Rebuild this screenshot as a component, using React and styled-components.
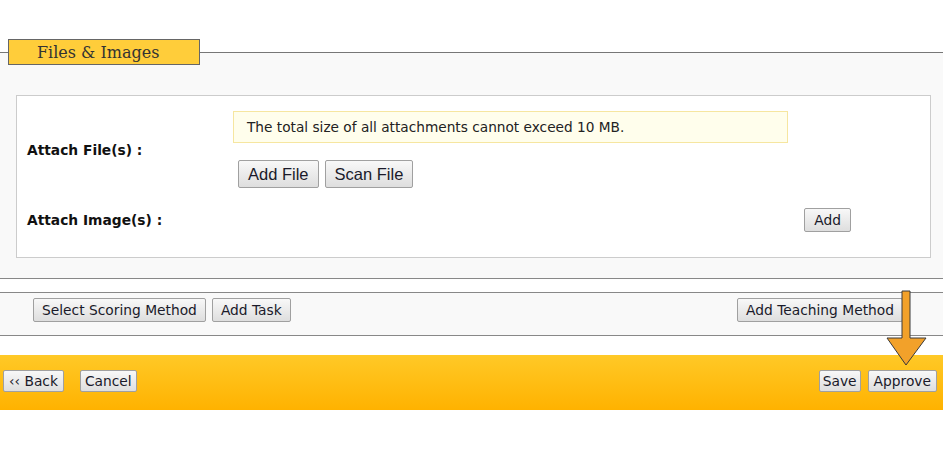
import React from "react";
import styled, { createGlobalStyle } from "styled-components";

const GlobalStyle = createGlobalStyle`
    body {
        margin: 0;
        background: #fff;
        font-family: "DejaVu Sans", Verdana, sans-serif;
        color: #222;
    }
`;

const Page = styled.div`
    position: relative;
    width: 943px;
    padding-top: 52px;
`;

const Section = styled.section`
    border-top: 1px solid #777;
    border-bottom: 1px solid #888;
    background: #f9f9f9;
    padding: 0 12px 20px 16px;
`;

const Legend = styled.div`
    width: 190px;
    height: 24px;
    margin: -14px 0 0 -8px;
    border: 1px solid #666;
    background: #ffcd3a;
    font-family: "DejaVu Serif", Georgia, serif;
    font-size: 16px;
    line-height: 25px;
    color: #333;
    text-indent: 28px;
`;

const Box = styled.div`
    margin-top: 30px;
    background: #fff;
    border: 1px solid #ccc;
    display: grid;
    grid-template-columns: 206px 1fr;
    row-gap: 20px;
    padding: 15px 0 25px 10px;
`;

const Label = styled.div`
    align-self: center;
    font-weight: bold;
    font-size: 13.8px;
    color: #111;
`;

const Cell = styled.div`
    display: flex;
    flex-direction: column;
    align-items: flex-start;
    gap: 17px;
`;

const Notice = styled.div`
    width: 540px;
    height: 30px;
    line-height: 30px;
    padding-left: 13px;
    background: #fffeec;
    border: 1px solid #f6e6a0;
    font-size: 13.7px;
    color: #222;
`;

const Row = styled.div`
    display: flex;
    gap: 6px;
    margin-left: 5px;
`;

const RightCell = styled.div`
    display: flex;
    justify-content: flex-end;
    padding-right: 79px;
`;

const Button = styled.button`
    height: ${p => p.$h || 24}px;
    padding: 0 ${p => p.$px || 8}px;
    font-family: ${p => (p.$arial ? '"Liberation Sans", Arial, sans-serif' : '"DejaVu Sans", Verdana, sans-serif')};
    font-size: ${p => p.$fs || 13.8}px;
    color: #1a1a2a;
    background: linear-gradient(#f8f8f8, #dedede);
    border: 1px solid #a0a0a0;
    border-radius: 2px;
    cursor: pointer;
    white-space: nowrap;
`;

const Gap = styled.div`
    height: 13px;
`;

const Toolbar = styled.div`
    display: flex;
    align-items: flex-start;
    gap: 6px;
    border-top: 1px solid #888;
    border-bottom: 1px solid #888;
    background: #f9f9f9;
    padding: 5px 40px 13px 33px;
`;

const Spacer = styled.div`
    flex: 1;
`;

const ActionBar = styled.div`
    margin-top: 19px;
    height: 55px;
    box-sizing: border-box;
    display: flex;
    align-items: flex-start;
    gap: 7px;
    padding: 15px 6px 0 3px;
    background: linear-gradient(#ffc927, #ffb200);
`;

const BackGroup = styled.div`
    display: flex;
    gap: 16px;
`;

const Arrow = styled.svg`
    position: absolute;
    left: 886px;
    top: 290px;
`;

export default function App() {
    return (
        <Page>
            <GlobalStyle />

            {/* Files & Images */}
            <Section>
                <Legend>Files &amp; Images</Legend>
                <Box>
                    <Label>Attach File(s) :</Label>
                    <Cell>
                        <Notice>The total size of all attachments cannot exceed 10 MB.</Notice>
                        <Row>
                            <Button $arial $fs={16.5} $h={28} $px={9}>Add File</Button>
                            <Button $arial $fs={16.5} $h={28} $px={9}>Scan File</Button>
                        </Row>
                    </Cell>
                    <Label>Attach Image(s) :</Label>
                    <RightCell>
                        <Button $h={24} $px={9}>Add</Button>
                    </RightCell>
                </Box>
            </Section>

            <Gap />

            <Toolbar>
                <Button>Select Scoring Method</Button>
                <Button>Add Task</Button>
                <Spacer />
                <Button>Add Teaching Method</Button>
            </Toolbar>

            <ActionBar>
                <BackGroup>
                    <Button $h={22} $px={5}>‹‹ Back</Button>
                    <Button $h={22} $px={4}>Cancel</Button>
                </BackGroup>
                <Spacer />
                <Button $h={22} $px={3}>Save</Button>
                <Button $h={22} $px={5}>Approve</Button>
            </ActionBar>

            <Arrow width="42" height="78" viewBox="0 0 42 78">
                <path
                    d="M16 1 H24 V48 H40 L20 75 L1 48 H16 Z"
                    fill="#f2a12a"
                    stroke="#3a3a3a"
                    strokeWidth="1"
                    strokeLinejoin="miter"
                />
            </Arrow>
        </Page>
    );
}
